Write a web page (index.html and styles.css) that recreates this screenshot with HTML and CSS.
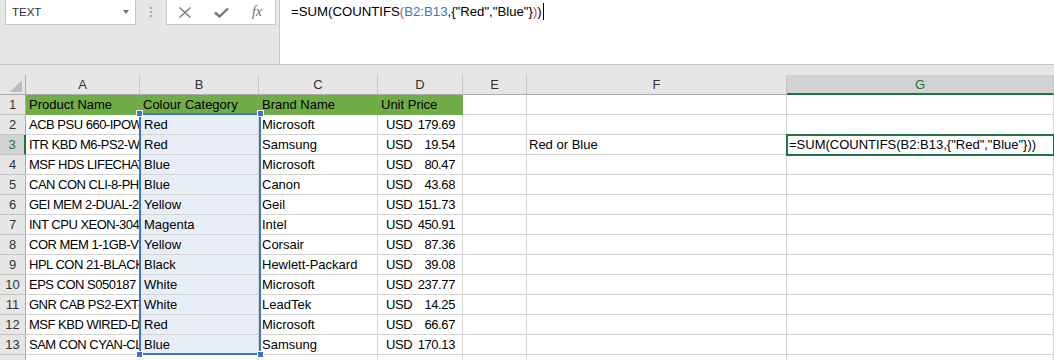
FILE: index.html
```
<!DOCTYPE html>
<html>
<head>
  <title>Book1 - Excel</title>
  <link rel="stylesheet" href="styles.css">
</head>
<body>
  <div class="formulaBar">
    <div class="tools">
      <div class="nameBox">
        <span>TEXT</span>
        <span class="caret"></span>
      </div>
      <div class="grip">
        <span></span><span></span><span></span>
      </div>
      <div class="fxBox">
        <div class="fxBtn">
          <svg width="12" height="11" viewBox="0 0 12 11"><path d="M0.5 0.5 L11.5 10.5 M11.5 0.5 L0.5 10.5" stroke="#7b7b7b" stroke-width="1.4" fill="none"/></svg>
        </div>
        <div class="fxBtn">
          <svg width="15" height="11" viewBox="0 0 15 11"><polyline points="1,5.5 5.5,9.5 14,1.5" stroke="#767676" stroke-width="2.4" fill="none"/></svg>
        </div>
        <div class="fxBtn fx">fx</div>
      </div>
    </div>
    <div class="formulaInput">=SUM(COUNTIFS<span class="paren">(</span><span class="ref">B2:B13</span>,{"Red","Blue"}<span class="paren">)</span>)<span class="cursor"></span></div>
  </div>

  <div class="gap"></div>

  <div class="sheet">
    <div class="grid" id="grid"></div>
    <div class="refBox">
      <span class="handle tl"></span>
      <span class="handle tr"></span>
      <span class="handle bl"></span>
      <span class="handle br"></span>
    </div>
  </div>

  <script>
    // product list
    const rows = [
      ['ACB PSU 660-IPOWER', 'Red', 'Microsoft', '179.69'],
      ['ITR KBD M6-PS2-WHT', 'Red', 'Samsung', '19.54'],
      ['MSF HDS LIFECHAT-LX3000', 'Blue', 'Microsoft', '80.47'],
      ['CAN CON CLI-8-PHOTO', 'Blue', 'Canon', '43.68'],
      ['GEI MEM 2-DUAL-2GB', 'Yellow', 'Geil', '151.73'],
      ['INT CPU XEON-3040', 'Magenta', 'Intel', '450.91'],
      ['COR MEM 1-1GB-VS', 'Yellow', 'Corsair', '87.36'],
      ['HPL CON 21-BLACK-INK', 'Black', 'Hewlett-Packard', '39.08'],
      ['EPS CON S050187', 'White', 'Microsoft', '237.77'],
      ['GNR CAB PS2-EXT-1.8M', 'White', 'LeadTek', '14.25'],
      ['MSF KBD WIRED-DESKTOP', 'Red', 'Microsoft', '66.67'],
      ['SAM CON CYAN-CLT', 'Blue', 'Samsung', '170.13']
    ];

    const grid = document.getElementById('grid');
    let html = '<div class="corner"><span class="tri"></span></div>';

    ['A', 'B', 'C', 'D', 'E', 'F', 'G'].forEach((l) => {
      html += `<div class="colHead${l == 'G' ? ' active' : ''}">${l}</div>`;
    });

    html += `
      <div class="rowHead">1</div>
      <div class="cell green">Product Name</div>
      <div class="cell green">Colour Category</div>
      <div class="cell green">Brand Name</div>
      <div class="cell green">Unit Price</div>
      <div class="cell"></div><div class="cell"></div><div class="cell"></div>`;

    for (let i = 0; i < rows.length; i++) {
      const n = i + 2;
      html += `
        <div class="rowHead${n == 3 ? ' active' : ''}">${n}</div>
        <div class="cell code">${rows[i][0]}</div>
        <div class="cell sel">${rows[i][1]}</div>
        <div class="cell">${rows[i][2]}</div>
        <div class="cell money"><span>USD</span><span>${rows[i][3]}</span></div>
        <div class="cell"></div>
        <div class="cell label">${n == 3 ? 'Red or Blue' : ''}</div>
        <div class="cell${n == 3 ? ' activeCell' : ''}">${n == 3 ? '=SUM(COUNTIFS(B2:B13,{"Red","Blue"}))' : ''}</div>`;
    }

    html += '<div class="rowHead">14</div>';
    for (let j = 0; j < 7; j++) {
      html += '<div class="cell"></div>';
    }

    grid.innerHTML = html;
  </script>
</body>
</html>
```

FILE: styles.css
```
* {
  margin: 0;
  padding: 0;
  box-sizing: border-box;
}

body {
  height: 360px;
  overflow: hidden;
  background-color: #e6e6e6;
  color: #000;
  font-family: "Liberation Sans", Arial, sans-serif;
  font-size: 13px;
}

/* formula bar */
.formulaBar {
  display: flex;
  height: 65px;
  border-bottom: 1px solid #c6c6c6;
}

.tools {
  width: 280px;
  display: flex;
  align-items: flex-start;
  padding-left: 5px;
  border-right: 1px solid #c6c6c6;
}

.nameBox {
  width: 131px;
  height: 25px;
  display: flex;
  align-items: center;
  justify-content: space-between;
  padding: 0 6px;
  background-color: #fff;
  border: 1px solid #c6c6c6;
  border-top: none;
  font-size: 11.5px;
  color: #333;
}

.caret {
  width: 0;
  height: 0;
  border-left: 3.5px solid transparent;
  border-right: 3.5px solid transparent;
  border-top: 4px solid #6f6f6f;
}

.grip {
  width: 30px;
  display: flex;
  flex-direction: column;
  align-items: center;
  gap: 2px;
  padding-top: 7px;
}

.grip span {
  width: 2px;
  height: 2px;
  background-color: #a9a9a9;
}

.fxBox {
  width: 110px;
  height: 25px;
  display: flex;
  background-color: #fff;
  border: 1px solid #c6c6c6;
  border-top: none;
}

.fxBtn {
  width: 36px;
  display: flex;
  align-items: center;
  justify-content: center;
}

.fx {
  font-family: "Liberation Serif", serif;
  font-style: italic;
  font-size: 14px;
  color: #6b6b6b;
}

.formulaInput {
  flex: 1;
  background-color: #fff;
  padding: 2px 0 0 11px;
  line-height: 20px;
  font-size: 13.2px;
  white-space: nowrap;
}

.paren {
  color: #e0415a;
}

.ref {
  color: #3c74c9;
}

.cursor {
  display: inline-block;
  width: 1px;
  height: 17px;
  margin-left: 1px;
  vertical-align: -4px;
  background-color: #000;
}

.gap {
  height: 10px;
}

/* sheet */
.sheet {
  position: relative;
  background-color: #fff;
}

.grid {
  display: grid;
  grid-template-columns: 26px 114px 119px 119px 85px 64px 260px 1fr;
  grid-auto-rows: 20px;
}

.corner {
  display: flex;
  align-items: flex-end;
  justify-content: flex-end;
  padding: 0 3px 2px 0;
  background-color: #e6e6e6;
  border-right: 1px solid #ababab;
  border-bottom: 1px solid #ababab;
}

.tri {
  width: 0;
  height: 0;
  border-left: 12px solid transparent;
  border-bottom: 12px solid #bcbcbc;
}

.colHead {
  background-color: #e6e6e6;
  border-right: 1px solid #c6c6c6;
  border-bottom: 1px solid #ababab;
  text-align: center;
  line-height: 19px;
  color: #333;
}

.colHead.active {
  background-color: #d2d2d2;
  color: #217346;
  border-bottom: 2px solid #217346;
}

.rowHead {
  background-color: #e6e6e6;
  border-right: 1px solid #ababab;
  border-bottom: 1px solid #c6c6c6;
  text-align: center;
  line-height: 20px;
  color: #333;
}

.rowHead.active {
  background-color: #d2d2d2;
  color: #217346;
  border-right: 2px solid #217346;
}

.cell {
  padding: 0 3px;
  border-right: 1px solid #d4d4d4;
  border-bottom: 1px solid #d4d4d4;
  line-height: 20px;
  white-space: nowrap;
  overflow: hidden;
}

.code {
  letter-spacing: -0.5px;
}

.label {
  padding-left: 2px;
}

.green {
  background-color: #70ad47;
  border-color: #70ad47;
}

.sel {
  background-color: #e8eef8;
  padding-left: 4px;
}

.money {
  display: flex;
  justify-content: space-between;
  padding: 0 7px 0 8px;
  letter-spacing: -0.4px;
}

.activeCell {
  position: relative;
  z-index: 1;
  overflow: visible;
  outline: 2px solid #217346;
  outline-offset: -1px;
  padding-left: 2px;
}

/* range highlight from the formula */
.refBox {
  position: absolute;
  left: 139px;
  top: 38px;
  width: 122px;
  height: 242px;
  border: 2px solid #3c74c9;
}

.handle {
  position: absolute;
  width: 7px;
  height: 7px;
  background-color: #3c74c9;
  border: 1px solid #fff;
}

.tl {
  left: -5px;
  top: -5px;
}

.tr {
  right: -5px;
  top: -5px;
}

.bl {
  left: -5px;
  bottom: -5px;
}

.br {
  right: -5px;
  bottom: -5px;
}
```
